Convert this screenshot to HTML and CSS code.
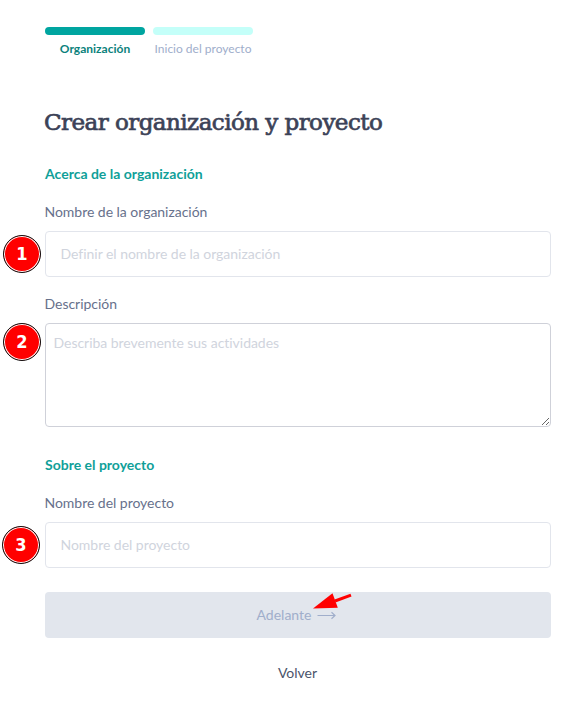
FILE: index.html
```html
<!DOCTYPE html>
<html lang="es">
<head>
<meta charset="utf-8">
<title>Crear organización y proyecto</title>
<link rel="stylesheet" href="styles.css">
</head>
<body>
<main class="page">
  <ol class="steps">
    <li class="step step-active"><span class="bar"></span><span class="step-label">Organización</span></li>
    <li class="step"><span class="bar"></span><span class="step-label">Inicio del proyecto</span></li>
  </ol>
  <h1 class="title">Crear organización y proyecto</h1>
  <form class="form">
    <h2 class="section">Acerca de la organización</h2>
    <label class="label" for="org">Nombre de la organización</label>
    <div class="field">
      <input class="input" id="org" type="text" placeholder="Definir el nombre de la organización">
      <span class="badge">1</span>
    </div>
    <label class="label" for="desc">Descripción</label>
    <div class="field">
      <textarea class="input textarea" id="desc" placeholder="Describa brevemente sus actividades"></textarea>
      <span class="badge badge-top">2</span>
    </div>
    <h2 class="section section-project">Sobre el proyecto</h2>
    <label class="label" for="project">Nombre del proyecto</label>
    <div class="field">
      <input class="input" id="project" type="text" placeholder="Nombre del proyecto">
      <span class="badge badge-left">3</span>
    </div>
    <button class="next" type="button">
      <span>Adelante</span>
      <svg class="next-icon" width="20" height="9" viewBox="0 0 20 9" fill="none" stroke="currentColor" stroke-width="1.2"><path d="M0.5 4.5H18M14.5 1.3L18 4.5L14.5 7.7"/></svg>
      <svg class="pointer" width="40" height="18" viewBox="0 0 40 18"><path d="M38 3.2L22 9" stroke="#f00" stroke-width="3"/><path d="M0 16.5L19.5 1.2L24.8 15.8Z" fill="#f00"/></svg>
    </button>
    <a class="back">Volver</a>
  </form>
</main>
</body>
</html>
```
FILE: styles.css
```css
* { box-sizing: border-box; }
body {
  margin: 0;
  background: #fff;
  font-family: Lato, "Liberation Sans", sans-serif;
  font-size: 14px;
  line-height: 20px;
  color: #67718c;
}
.page { padding: 27px 25px 0 45px; }
.steps { display: flex; gap: 8px; margin: 0; padding: 0; list-style: none; }
.step { width: 100px; display: flex; flex-direction: column; align-items: center; color: #a0aecb; }
.bar { width: 100%; height: 8px; border-radius: 4px; background: #c4fff9; }
.step-label { margin-top: 4px; font-size: 12px; line-height: 20px; white-space: nowrap; }
.step-active { color: #0b827c; font-weight: 700; }
.step-active .bar { background: #00a5a0; }
.title {
  margin: 47px 0 0 -1px;
  font-family: "DejaVu Serif", serif;
  font-size: 23px;
  line-height: 32px;
  font-weight: 400;
  letter-spacing: -0.55px;
  -webkit-text-stroke: 0.7px #3c4257;
  color: #3c4257;
  white-space: nowrap;
}
.form { display: flex; flex-direction: column; margin-top: 26px; }
.section { margin: 0 0 18px; font-size: 14px; line-height: 20px; font-weight: 700; color: #109f99; }
.section-project { margin-top: 4px; }
.label { margin: 0 0 9px -0.5px; letter-spacing: -0.03px; }
.field { position: relative; display: flex; margin-bottom: 17px; }
.input {
  width: 100%;
  height: 46px;
  padding: 0 15px 2px 14.5px;
  border: 1px solid #e2e5ec;
  border-radius: 4px;
  background: #fff;
  font: inherit;
  letter-spacing: -0.03px;
}
.input::placeholder { color: #d0d4dd; opacity: 1; }
.textarea { height: 104px; margin-bottom: 7px; padding: 9px 8px 9px 7.5px; border-color: #cfd1d9; resize: both; }
.badge {
  position: absolute;
  left: -42px;
  top: 4px;
  width: 38px;
  height: 38px;
  border: 1.5px solid #111;
  border-radius: 50%;
  background: #f00;
  box-shadow: inset 0 0 0 1px #fff;
  color: #fff;
  font: 700 18px/36px "DejaVu Sans Condensed", "DejaVu Sans", sans-serif;
  font-stretch: condensed;
  text-align: center;
}
.badge-top { top: 0; }
.badge-left { left: -43px; }
.next {
  position: relative;
  display: flex;
  align-items: center;
  justify-content: center;
  gap: 6px;
  height: 46px;
  margin-top: 7px;
  padding: 0 2px 0 0;
  border: 0;
  border-radius: 4px;
  background: #e2e6ed;
  color: #a0aecb;
  font: inherit;
}
.pointer { position: absolute; left: 268px; top: 0; }
.back { margin: 25px 1px 0 0; text-align: center; color: #4b546b; }
```
